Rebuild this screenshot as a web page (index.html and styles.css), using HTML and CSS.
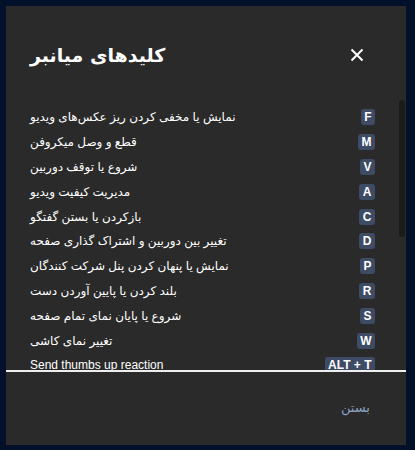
FILE: index.html
```html
<!DOCTYPE html>
<html lang="fa">
<head>
<meta charset="utf-8">
<link rel="stylesheet" href="styles.css">
</head>
<body>
<div class="modal">
  <div class="header">
    <h1 class="title">کلیدهای میانبر</h1>
    <svg class="close" viewBox="0 0 14 14" width="14" height="14"><path d="M1.5 1.5 L12.5 12.5 M12.5 1.5 L1.5 12.5" stroke="#fff" stroke-width="2" fill="none"/></svg>
  </div>
  <div class="list-wrap">
    <div class="list">
      <div class="row"><span class="label">نمایش یا مخفی کردن ریز عکس‌های ویدیو</span><span class="key">F</span></div>
      <div class="row"><span class="label">قطع و وصل میکروفن</span><span class="key">M</span></div>
      <div class="row"><span class="label">شروع یا توقف دوربین</span><span class="key">V</span></div>
      <div class="row"><span class="label">مدیریت کیفیت ویدیو</span><span class="key">A</span></div>
      <div class="row"><span class="label">بازکردن یا بستن گفتگو</span><span class="key">C</span></div>
      <div class="row"><span class="label">تغییر بین دوربین و اشتراک گذاری صفحه</span><span class="key">D</span></div>
      <div class="row"><span class="label">نمایش یا پنهان کردن پنل شرکت کنندگان</span><span class="key">P</span></div>
      <div class="row"><span class="label">بلند کردن یا پایین آوردن دست</span><span class="key">R</span></div>
      <div class="row"><span class="label">شروع یا پایان نمای تمام صفحه</span><span class="key">S</span></div>
      <div class="row"><span class="label">تغییر نمای کاشی</span><span class="key">W</span></div>
      <div class="row"><span class="label">Send thumbs up reaction</span><span class="key">ALT + T</span></div>
      <div class="row"><span class="label">Send clap reaction</span><span class="key">ALT + C</span></div>
      <div class="row"><span class="label">Send laughing reaction</span><span class="key">ALT + L</span></div>
      <div class="row"><span class="label">Send surprised reaction</span><span class="key">ALT + O</span></div>
      <div class="row"><span class="label">Send boo reaction</span><span class="key">ALT + B</span></div>
      <div class="row"><span class="label">Send silence reaction</span><span class="key">ALT + S</span></div>
      <div class="row"><span class="label">Push to talk</span><span class="key">SPACE</span></div>
      <div class="row"><span class="label">نمایش آمار سخنرانان</span><span class="key">T</span></div>
      <div class="row"><span class="label">نمایش یا پنهان کردن کلیدهای میانبر</span><span class="key">?</span></div>
      <div class="row"><span class="label">تمرکز روی ویدیوی شما</span><span class="key">0</span></div>
      <div class="row"><span class="label">تمرکز روی ویدیوی یک نفر دیگر</span><span class="key">1-9</span></div>
    </div>
    <div class="thumb"></div>
  </div>
  <div class="footer">
    <span class="cancel">بستن</span>
  </div>
</div>
</body>
</html>
```
FILE: styles.css
```css
html, body {
  margin: 0;
  padding: 0;
}
body {
  background: #03102a;
  font-family: "Liberation Sans", "DejaVu Sans", sans-serif;
  color: #fff;
  width: 415px;
  height: 450px;
  padding: 6px;
  box-sizing: border-box;
}
.modal {
  width: 400px;
  height: 439px;
  background: #2a2a2a;
  display: flex;
  flex-direction: column;
}
.header {
  height: 94px;
  box-sizing: border-box;
  padding: 4px 42px 0 24px;
  display: flex;
  align-items: center;
  justify-content: space-between;
  flex-shrink: 0;
}
.title {
  margin: 0;
  font-family: "DejaVu Sans", sans-serif;
  font-weight: bold;
  font-size: 19px;
  line-height: 28px;
  color: #fff;
}
.close {
  display: block;
}
.list-wrap {
  position: relative;
  height: 270px;
  flex-shrink: 0;
}
.list {
  height: 100%;
  overflow-y: auto;
  scrollbar-width: none;
  box-sizing: border-box;
  padding: 5px 31px 6px 24px;
}
.list::-webkit-scrollbar {
  display: none;
}
.thumb {
  position: absolute;
  top: 0;
  right: 1px;
  width: 6px;
  height: 137px;
  background: #1b1b1b;
  border-radius: 3px;
}
.row {
  height: 24.8px;
  display: flex;
  align-items: center;
  justify-content: space-between;
  font-size: 12px;
}
.label {
  color: #fff;
  white-space: nowrap;
}
.key {
  background: #3e4b65;
  color: #fff;
  font-weight: bold;
  font-size: 12px;
  line-height: 16px;
  height: 16px;
  padding: 0 3.5px;
  border-radius: 3px;
  min-width: 7px;
  text-align: center;
}
.footer {
  flex: 1;
  border-top: 2px solid #eeeeee;
  display: flex;
  align-items: center;
  justify-content: flex-end;
  padding: 0 36px 3px 0;
}
.cancel {
  font-size: 13px;
  color: #8fa2c4;
}
```
